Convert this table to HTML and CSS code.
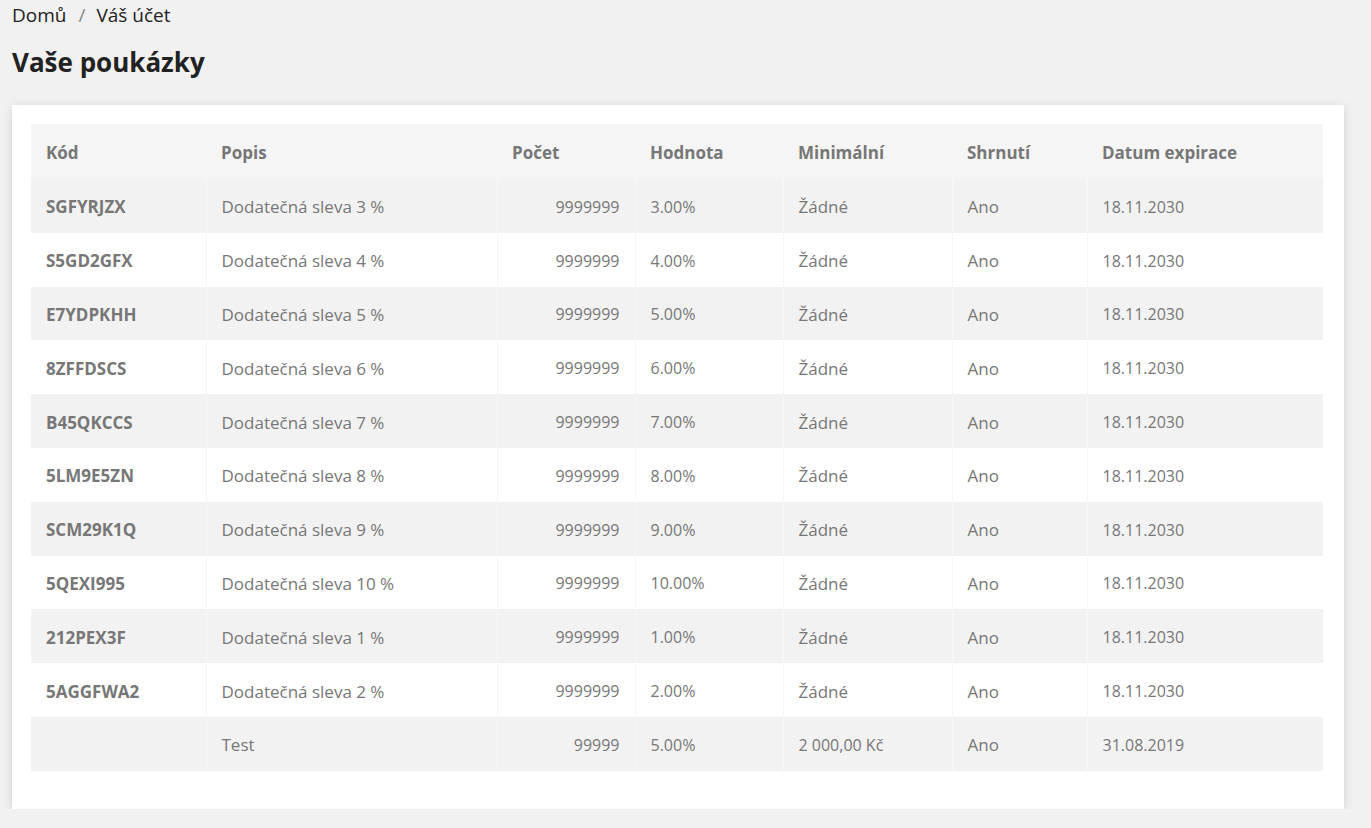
FILE: index.html
```html
<!DOCTYPE html>
<html lang="cs">
<head>
<meta charset="utf-8">
<title>Vaše poukázky</title>
<link rel="stylesheet" href="styles.css">
</head>
<body>
<nav class="breadcrumb"><a class="crumb" href="#">Domů</a><span class="sep">/</span><span class="crumb">Váš účet</span></nav>
<h1 class="title">Vaše poukázky</h1>
<section class="card">
<table class="vouchers">
<colgroup>
<col class="c1"><col class="c2"><col class="c3"><col class="c4"><col class="c5"><col class="c6"><col class="c7">
</colgroup>
<thead>
<tr><th>Kód</th><th>Popis</th><th>Počet</th><th>Hodnota</th><th>Minimální</th><th>Shrnutí</th><th>Datum expirace</th></tr>
</thead>
<tbody>
<tr><td class="code">SGFYRJZX</td><td>Dodatečná sleva 3 %</td><td class="num">9999999</td><td class="fig">3.00%</td><td>Žádné</td><td>Ano</td><td class="fig">18.11.2030</td></tr>
<tr><td class="code">S5GD2GFX</td><td>Dodatečná sleva 4 %</td><td class="num">9999999</td><td class="fig">4.00%</td><td>Žádné</td><td>Ano</td><td class="fig">18.11.2030</td></tr>
<tr><td class="code">E7YDPKHH</td><td>Dodatečná sleva 5 %</td><td class="num">9999999</td><td class="fig">5.00%</td><td>Žádné</td><td>Ano</td><td class="fig">18.11.2030</td></tr>
<tr><td class="code">8ZFFDSCS</td><td>Dodatečná sleva 6 %</td><td class="num">9999999</td><td class="fig">6.00%</td><td>Žádné</td><td>Ano</td><td class="fig">18.11.2030</td></tr>
<tr><td class="code">B45QKCCS</td><td>Dodatečná sleva 7 %</td><td class="num">9999999</td><td class="fig">7.00%</td><td>Žádné</td><td>Ano</td><td class="fig">18.11.2030</td></tr>
<tr><td class="code">5LM9E5ZN</td><td>Dodatečná sleva 8 %</td><td class="num">9999999</td><td class="fig">8.00%</td><td>Žádné</td><td>Ano</td><td class="fig">18.11.2030</td></tr>
<tr><td class="code">SCM29K1Q</td><td>Dodatečná sleva 9 %</td><td class="num">9999999</td><td class="fig">9.00%</td><td>Žádné</td><td>Ano</td><td class="fig">18.11.2030</td></tr>
<tr><td class="code">5QEXI995</td><td>Dodatečná sleva 10 %</td><td class="num">9999999</td><td class="fig">10.00%</td><td>Žádné</td><td>Ano</td><td class="fig">18.11.2030</td></tr>
<tr><td class="code">212PEX3F</td><td>Dodatečná sleva 1 %</td><td class="num">9999999</td><td class="fig">1.00%</td><td>Žádné</td><td>Ano</td><td class="fig">18.11.2030</td></tr>
<tr><td class="code">5AGGFWA2</td><td>Dodatečná sleva 2 %</td><td class="num">9999999</td><td class="fig">2.00%</td><td>Žádné</td><td>Ano</td><td class="fig">18.11.2030</td></tr>
<tr><td class="code"></td><td>Test</td><td class="num">99999</td><td class="fig">5.00%</td><td class="fig">2 000,00 Kč</td><td>Ano</td><td class="fig">31.08.2019</td></tr>
</tbody>
</table>
</section>
</body>
</html>
```
FILE: styles.css
```css
html, body {
  margin: 0;
  padding: 0;
}
body {
  background: #f1f1f1;
  font-family: "Open Sans", "Liberation Sans", sans-serif;
  color: #222;
  padding: 0 27px 0 12px;
}
.breadcrumb {
  display: flex;
  align-items: center;
  height: 30px;
  font-size: 19px;
  line-height: 30px;
  color: #222;
}
.crumb {
  color: #222;
  text-decoration: none;
}
.sep {
  color: #888;
  margin: 0 11px 0 12px;
}
.title {
  margin: 15px 0 26px;
  font-size: 26px;
  font-weight: 700;
  line-height: 34px;
  color: #222;
}
.card {
  background: #fff;
  box-shadow: 0 2px 10px rgba(0, 0, 0, 0.13);
  padding: 19px 21px 38px 19px;
}
.vouchers {
  width: 100%;
  border-collapse: collapse;
  table-layout: fixed;
  font-size: 17px;
  color: #777;
}
.c1 { width: 175px; }
.c2 { width: 291px; }
.c3 { width: 138px; }
.c4 { width: 148px; }
.c5 { width: 169px; }
.c6 { width: 135px; }
.c7 { width: auto; }
.vouchers th {
  background: #f5f5f5;
  height: 53px;
  text-align: left;
  font-weight: 700;
  padding: 2px 15px 0;
  color: #777;
}
.vouchers td {
  height: 51.8px;
  padding: 2px 15px 0;
  border-left: 1px solid #f5f5f5;
  white-space: nowrap;
}
.vouchers td:first-child {
  border-left: none;
}
.vouchers tbody tr:nth-child(odd) td {
  background: #f2f2f2;
  border-left-color: #f8f8f8;
}
.vouchers tbody tr:nth-child(odd) td:first-child {
  border-left: none;
}
.vouchers td.code {
  font-weight: 700;
}
.vouchers td.num {
  text-align: right;
  font-size: 16px;
}
.vouchers td.fig {
  font-size: 16px;
}
```
